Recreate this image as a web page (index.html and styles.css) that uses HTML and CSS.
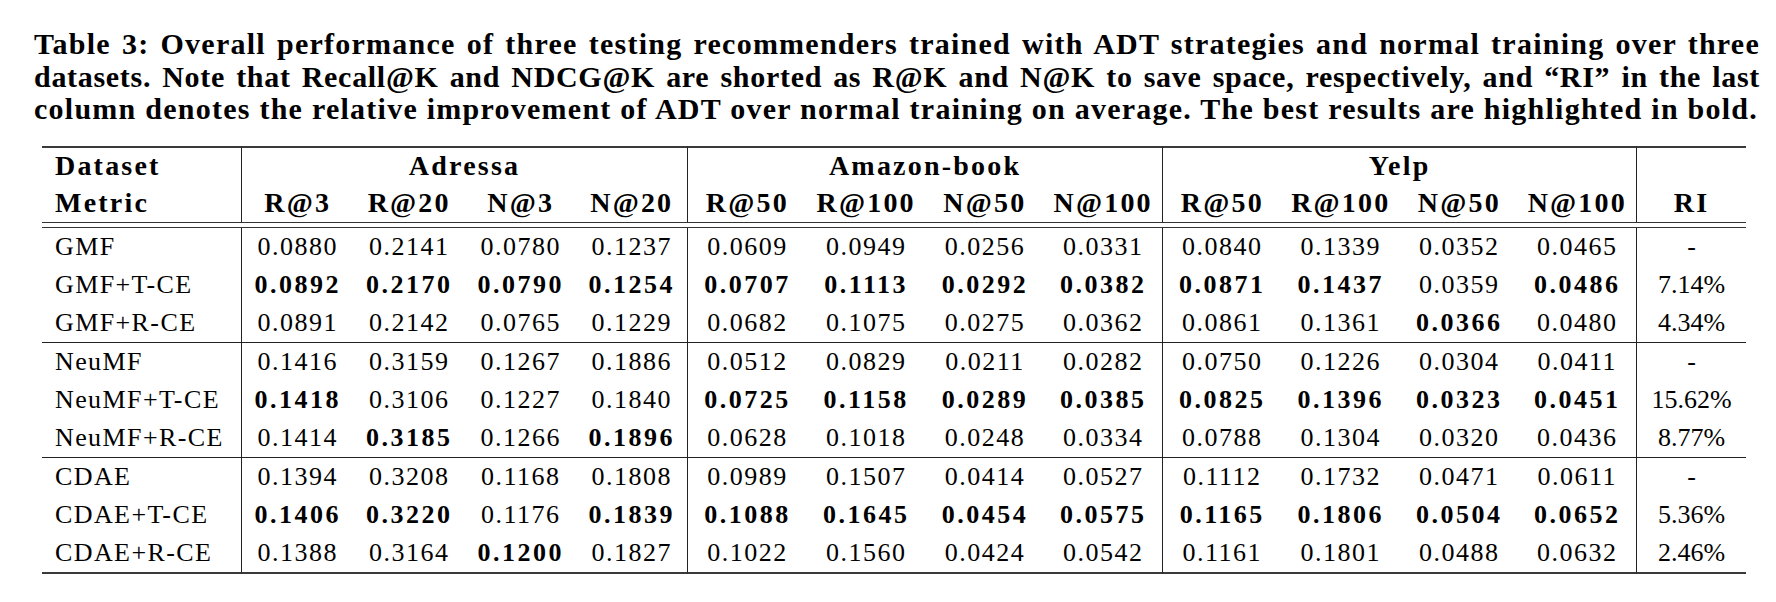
FILE: index.html
```html
<!DOCTYPE html>
<html lang="en">
<head>
<meta charset="utf-8">
<title>Table 3</title>
<link rel="stylesheet" href="styles.css">
</head>
<body>
<div class="page">
  <p class="caption"><span class="line">Table 3: Overall performance of three testing recommenders trained with ADT strategies and normal training over three</span><span class="line tight">datasets. Note that Recall@K and NDCG@K are shorted as R@K and N@K to save space, respectively, and “RI” in the last</span><span class="line">column denotes the relative improvement of ADT over normal training on average. The best results are highlighted in bold.</span></p>
  <table class="results">
    <colgroup>
      <col class="c-name">
      <col class="c-adr"><col class="c-adr"><col class="c-adr"><col class="c-adr">
      <col class="c-amz"><col class="c-amz"><col class="c-amz"><col class="c-amz">
      <col class="c-yelp"><col class="c-yelp"><col class="c-yelp"><col class="c-yelp">
      <col class="c-ri">
    </colgroup>
    <thead>
      <tr class="head top">
        <th class="name">Dataset</th>
        <th colspan="4" class="end">Adressa</th>
        <th colspan="4" class="end">Amazon-book</th>
        <th colspan="4" class="end">Yelp</th>
        <th class="ri"></th>
      </tr>
      <tr class="head">
        <th class="name">Metric</th>
        <th>R@3</th><th>R@20</th><th>N@3</th><th class="end">N@20</th>
        <th>R@50</th><th>R@100</th><th>N@50</th><th class="end">N@100</th>
        <th>R@50</th><th>R@100</th><th>N@50</th><th class="end">N@100</th>
        <th class="ri">RI</th>
      </tr>
      <tr class="sep"><td colspan="14"></td></tr>
    </thead>
    <tbody class="group">
      <tr>
        <td class="name">GMF</td>
        <td>0.0880</td><td>0.2141</td><td>0.0780</td><td class="end">0.1237</td>
        <td>0.0609</td><td>0.0949</td><td>0.0256</td><td class="end">0.0331</td>
        <td>0.0840</td><td>0.1339</td><td>0.0352</td><td class="end">0.0465</td>
        <td class="ri">-</td>
      </tr>
      <tr>
        <td class="name">GMF+T-CE</td>
        <td><b>0.0892</b></td><td><b>0.2170</b></td><td><b>0.0790</b></td><td class="end"><b>0.1254</b></td>
        <td><b>0.0707</b></td><td><b>0.1113</b></td><td><b>0.0292</b></td><td class="end"><b>0.0382</b></td>
        <td><b>0.0871</b></td><td><b>0.1437</b></td><td>0.0359</td><td class="end"><b>0.0486</b></td>
        <td class="ri">7.14%</td>
      </tr>
      <tr>
        <td class="name">GMF+R-CE</td>
        <td>0.0891</td><td>0.2142</td><td>0.0765</td><td class="end">0.1229</td>
        <td>0.0682</td><td>0.1075</td><td>0.0275</td><td class="end">0.0362</td>
        <td>0.0861</td><td>0.1361</td><td><b>0.0366</b></td><td class="end">0.0480</td>
        <td class="ri">4.34%</td>
      </tr>
    </tbody>
    <tbody class="group">
      <tr>
        <td class="name">NeuMF</td>
        <td>0.1416</td><td>0.3159</td><td>0.1267</td><td class="end">0.1886</td>
        <td>0.0512</td><td>0.0829</td><td>0.0211</td><td class="end">0.0282</td>
        <td>0.0750</td><td>0.1226</td><td>0.0304</td><td class="end">0.0411</td>
        <td class="ri">-</td>
      </tr>
      <tr>
        <td class="name">NeuMF+T-CE</td>
        <td><b>0.1418</b></td><td>0.3106</td><td>0.1227</td><td class="end">0.1840</td>
        <td><b>0.0725</b></td><td><b>0.1158</b></td><td><b>0.0289</b></td><td class="end"><b>0.0385</b></td>
        <td><b>0.0825</b></td><td><b>0.1396</b></td><td><b>0.0323</b></td><td class="end"><b>0.0451</b></td>
        <td class="ri">15.62%</td>
      </tr>
      <tr>
        <td class="name">NeuMF+R-CE</td>
        <td>0.1414</td><td><b>0.3185</b></td><td>0.1266</td><td class="end"><b>0.1896</b></td>
        <td>0.0628</td><td>0.1018</td><td>0.0248</td><td class="end">0.0334</td>
        <td>0.0788</td><td>0.1304</td><td>0.0320</td><td class="end">0.0436</td>
        <td class="ri">8.77%</td>
      </tr>
    </tbody>
    <tbody class="group last">
      <tr>
        <td class="name">CDAE</td>
        <td>0.1394</td><td>0.3208</td><td>0.1168</td><td class="end">0.1808</td>
        <td>0.0989</td><td>0.1507</td><td>0.0414</td><td class="end">0.0527</td>
        <td>0.1112</td><td>0.1732</td><td>0.0471</td><td class="end">0.0611</td>
        <td class="ri">-</td>
      </tr>
      <tr>
        <td class="name">CDAE+T-CE</td>
        <td><b>0.1406</b></td><td><b>0.3220</b></td><td>0.1176</td><td class="end"><b>0.1839</b></td>
        <td><b>0.1088</b></td><td><b>0.1645</b></td><td><b>0.0454</b></td><td class="end"><b>0.0575</b></td>
        <td><b>0.1165</b></td><td><b>0.1806</b></td><td><b>0.0504</b></td><td class="end"><b>0.0652</b></td>
        <td class="ri">5.36%</td>
      </tr>
      <tr>
        <td class="name">CDAE+R-CE</td>
        <td>0.1388</td><td>0.3164</td><td><b>0.1200</b></td><td class="end">0.1827</td>
        <td>0.1022</td><td>0.1560</td><td>0.0424</td><td class="end">0.0542</td>
        <td>0.1161</td><td>0.1801</td><td>0.0488</td><td class="end">0.0632</td>
        <td class="ri">2.46%</td>
      </tr>
    </tbody>
  </table>
</div>
</body>
</html>
```

FILE: styles.css
```css
html, body {
  margin: 0;
  padding: 0;
  background: #ffffff;
}

.page {
  padding: 28px 16px 0 34px;
  font-family: "Liberation Serif", "Times New Roman", serif;
  color: #000;
}

.caption {
  margin: 0;
  width: 1726px;
  font-size: 30px;
  line-height: 32.5px;
  font-weight: bold;
  letter-spacing: 1.25px;
  text-align: justify;
}

.caption .line {
  display: block;
  white-space: nowrap;
}

.caption .line:not(:last-child) {
  text-align-last: justify;
}

.caption .line.tight {
  letter-spacing: 0.7px;
}

.results {
  margin: 20px 0 0 8px;
  width: 1704px;
  table-layout: fixed;
  border-collapse: separate;
  border-spacing: 0;
  font-size: 26px;
  letter-spacing: 1.5px;
}

.c-name { width: 200px; }
.c-adr { width: 111.5px; }
.c-amz { width: 118.75px; }
.c-yelp { width: 118.5px; }
.c-ri { width: 109px; }

.results th,
.results td {
  padding: 0;
  height: 38px;
  text-align: center;
  vertical-align: middle;
  white-space: nowrap;
}

.results th {
  font-weight: bold;
  font-size: 28px;
  letter-spacing: 2.2px;
}

.results b {
  font-weight: bold;
  letter-spacing: 2.5px;
}

.results .name {
  text-align: left;
  padding-left: 13px;
  letter-spacing: 1.4px;
  border-right: 1px solid #222;
}

.results th.name {
  letter-spacing: 2.2px;
}

.results td.ri {
  letter-spacing: 0;
}

.results .end {
  border-right: 1px solid #222;
}

.head.top th {
  border-top: 2px solid #3a3a3a;
}

.head th {
  height: 37px;
}

.head:nth-child(2) th {
  border-bottom: 1px solid #333;
}

.sep td {
  height: 4px;
  padding: 0;
  border-bottom: 1px solid #333;
}

.group + .group tr:first-child td {
  border-top: 1px solid #222;
}

.group tr td {
  height: 38px;
}

.group.last tr:last-child td {
  border-bottom: 2px solid #3a3a3a;
}
```
